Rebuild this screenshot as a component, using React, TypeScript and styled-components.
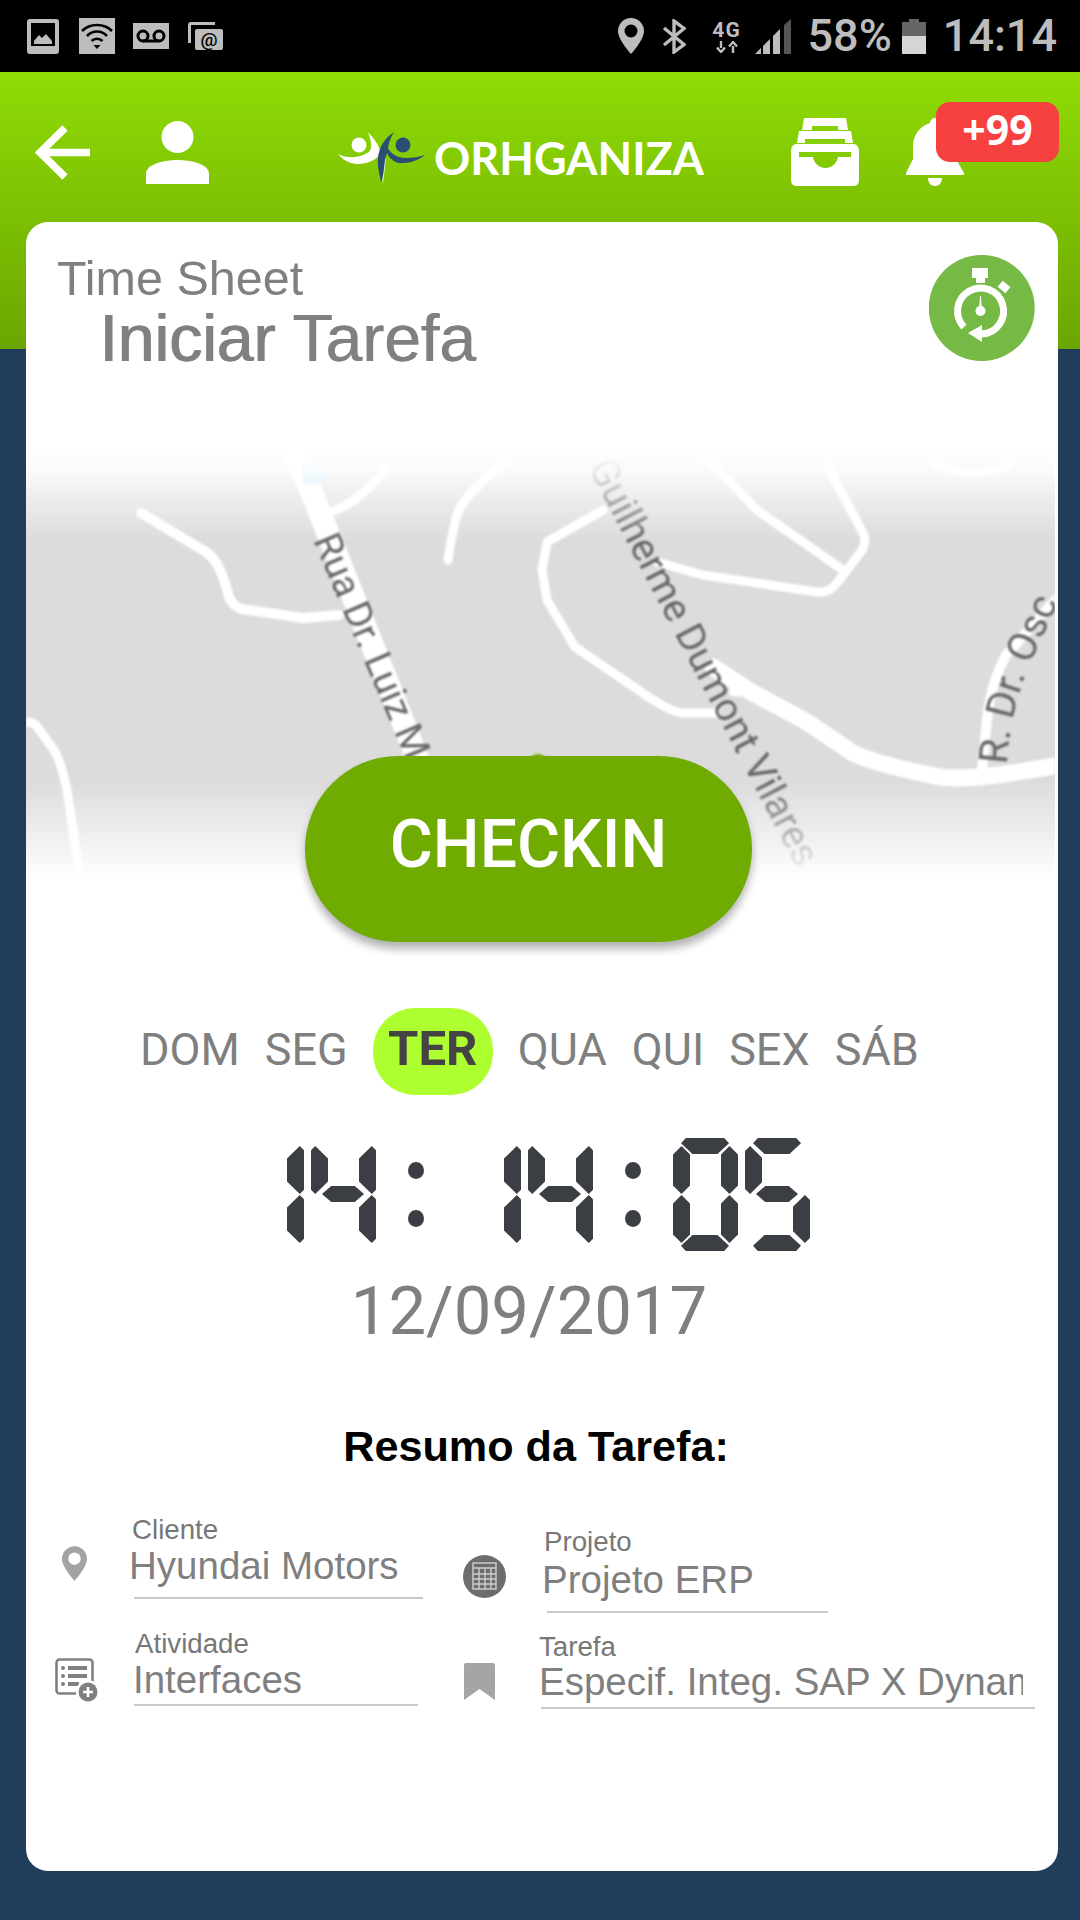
import React from 'react'
import styled, { createGlobalStyle } from 'styled-components'

const GlobalStyle = createGlobalStyle`
    html, body {
        margin: 0;
        padding: 0;
        background: #213d5c;
    }
    #root {
        width: 1080px;
        height: 1920px;
        overflow: hidden;
    }
`

const Page = styled.div`
    width: 1080px;
    height: 1920px;
    background: #213d5c;
    font-family: "Liberation Sans", Arial, sans-serif;
`

/* status bar */
const StatusBar = styled.div`
    height: 72px;
    background: #000;
    display: flex;
    align-items: center;
    padding-right: 23px;
    color: #bdbdbd;
`
const StatusSlot = styled.div<{ $ml: number }>`
    display: flex;
    align-items: center;
    margin-left: ${(p) => p.$ml}px;
`
const StatusRight = styled.div`
    margin-left: auto;
    display: flex;
    align-items: center;
`
const StatusText = styled.span<{ $ml: number }>`
    font-family: Roboto, sans-serif;
    font-size: 45px;
    font-weight: 500;
    line-height: 50px;
    margin-left: ${(p) => p.$ml}px;
`
const NetStack = styled.div`
    width: 28px;
    margin-left: 27px;
    display: flex;
    flex-direction: column;
    align-items: center;
`
const NetLabel = styled.span`
    font-family: Roboto, sans-serif;
    font-size: 21px;
    font-weight: 700;
    line-height: 21px;
    letter-spacing: 1px;
`

/* green header */
const Header = styled.header`
    height: 277px;
    background: linear-gradient(to bottom, #8fdc06, #6ba500);
    padding: 46px 0 0 35px;
    box-sizing: border-box;
`
const TopRow = styled.div`
    height: 68px;
    display: flex;
    align-items: center;
`
const TopIcon = styled.div<{ $ml: number; $w: number }>`
    width: ${(p) => p.$w}px;
    margin-left: ${(p) => p.$ml}px;
    flex: none;
    display: flex;
    position: relative;
`
const Logo = styled.div`
    width: 368px;
    margin-left: 127px;
    padding-top: 12px;
    flex: none;
    display: flex;
    align-items: center;
`
const LogoText = styled.span`
    margin-left: 7px;
    font-family: Lato, sans-serif;
    font-size: 45px;
    font-weight: 700;
    line-height: 50px;
    color: #fff;
    white-space: nowrap;
`
const Badge = styled.div`
    position: absolute;
    left: 30px;
    top: -16px;
    width: 123px;
    height: 60px;
    border-radius: 14px;
    background: #f74040;
    color: #fff;
    font-family: "Noto Sans", sans-serif;
    font-size: 41px;
    font-weight: 700;
    line-height: 54px;
    text-align: center;
`

/* card */
const Card = styled.main`
    position: relative;
    width: 1032px;
    height: 1649px;
    margin: -127px 0 0 26px;
    background: #fff;
    border-radius: 22px;
    overflow: hidden;
`
const CardHead = styled.div`
    display: flex;
    justify-content: space-between;
    align-items: flex-start;
    padding: 30px 23px 0 31px;
    height: 117px;
`
const Overline = styled.div`
    font-size: 48.5px;
    line-height: 48px;
    color: #808080;
    padding-top: 2px;
`
const Title = styled.h1`
    margin: 4px 0 0 42px;
    font-size: 66px;
    line-height: 64px;
    font-weight: 400;
    color: #808080;
    text-shadow: 0.8px 0 0 #808080;
    & b {
        font-weight: 400;
        text-shadow: 1.2px 0 0 #808080;
    }
`
const TimerBadge = styled.div`
    width: 106px;
    height: 106px;
    margin-top: 3px;
    display: flex;
`

const MapArea = styled.div`
    position: relative;
    height: 430px;
    margin-top: 81px;
    margin-right: 3px;
    background: #dcdcdc;
    overflow: hidden;
    & svg {
        display: block;
        filter: blur(1px);
    }
    &::after {
        content: '';
        position: absolute;
        inset: 0;
        background: linear-gradient(
            to bottom,
            #fff 0,
            rgba(255, 255, 255, 0.85) 5%,
            rgba(255, 255, 255, 0.5) 11%,
            rgba(255, 255, 255, 0) 21%,
            rgba(255, 255, 255, 0) 77%,
            #fff 100%
        );
    }
`
const CheckinButton = styled.button`
    position: relative;
    display: block;
    width: 447px;
    height: 186px;
    margin: -124px 0 0 279px;
    padding: 0 0 10px;
    border: none;
    border-radius: 93px;
    background: #6fab00;
    color: #fff;
    font-family: Roboto, sans-serif;
    font-size: 66px;
    font-weight: 500;
    box-shadow: 0 7px 9px rgba(0, 0, 0, 0.3);
`

const Days = styled.div`
    display: flex;
    align-items: center;
    gap: 25px;
    height: 87px;
    margin-top: 66px;
    padding-left: 114px;
`
const Day = styled.span<{ $active?: boolean }>`
    font-family: Roboto, sans-serif;
    font-size: ${(p) => (p.$active ? 49 : 45)}px;
    font-weight: ${(p) => (p.$active ? 700 : 400)};
    color: ${(p) => (p.$active ? '#444' : '#7f7f7f')};
    padding-bottom: ${(p) => (p.$active ? 0 : 4)}px;
    ${(p) =>
        p.$active &&
        `
        width: 120px;
        height: 87px;
        line-height: 82px;
        text-align: center;
        border-radius: 42px;
        background: #adff2f;
    `}
`

const Clock = styled.div`
    display: flex;
    gap: 7px;
    margin: 43px 0 0 213px;
    height: 113px;
`
const Digit = styled.div`
    position: relative;
    width: 65px;
    height: 113px;
    flex: none;
`
const VSeg = styled.i<{ $x: number; $y: number; $tip: number }>`
    position: absolute;
    left: ${(p) => p.$x}px;
    top: ${(p) => p.$y}px;
    width: 17px;
    height: 48px;
    background: #3b3e43;
    clip-path: polygon(
        ${(p) => p.$tip}% 0,
        100% ${(p) => (100 - p.$tip) * 0.35}%,
        100% ${(p) => 100 - (100 - p.$tip) * 0.35}%,
        ${(p) => p.$tip}% 100%,
        0 ${(p) => 100 - p.$tip * 0.35}%,
        0 ${(p) => p.$tip * 0.35}%
    );
`
const HSeg = styled.i<{ $y: number; $kind: 'top' | 'mid' | 'bottom' }>`
    position: absolute;
    left: ${(p) => (p.$kind === 'mid' ? 11 : 8)}px;
    top: ${(p) => p.$y}px;
    width: ${(p) => (p.$kind === 'mid' ? 42 : 48)}px;
    height: 16px;
    background: #3b3e43;
    clip-path: ${(p) =>
        p.$kind === 'top'
            ? 'polygon(10% 0, 90% 0, 100% 33%, 76% 100%, 24% 100%, 0 33%)'
            : p.$kind === 'bottom'
              ? 'polygon(24% 0, 76% 0, 100% 67%, 90% 100%, 10% 100%, 0 67%)'
              : 'polygon(22% 0, 78% 0, 100% 50%, 78% 100%, 22% 100%, 0 50%)'};
`
const Colon = styled.div`
    width: 16px;
    height: 113px;
    margin: 0 25px;
    flex: none;
    display: flex;
    flex-direction: column;
    gap: 31px;
    padding-top: 24px;
    box-sizing: border-box;
    & i {
        display: block;
        width: 16px;
        height: 17px;
        border-radius: 50%;
        background: #3b3e43;
    }
`

const DateText = styled.div`
    margin-top: 27px;
    padding-right: 26px;
    text-align: center;
    font-family: Roboto, sans-serif;
    font-size: 67px;
    line-height: 66px;
    color: #7f7f7f;
`
const SummaryTitle = styled.h2`
    margin: 81px 0 0;
    padding-right: 12px;
    text-align: center;
    font-size: 43.2px;
    line-height: 43px;
    font-weight: 700;
    color: #000;
`

const Fields = styled.div`
    display: flex;
    padding-left: 29px;
`
const FieldCol = styled.div<{ $w: number; $mt: number }>`
    width: ${(p) => p.$w}px;
    margin-top: ${(p) => p.$mt}px;
    flex: none;
`
const Field = styled.div<{ $mt?: number }>`
    display: flex;
    margin-top: ${(p) => p.$mt ?? 0}px;
`
const IconSlot = styled.div<{ $w: number; $pl: number; $top: number }>`
    width: ${(p) => p.$w}px;
    padding: ${(p) => p.$top}px 0 0 ${(p) => p.$pl}px;
    box-sizing: border-box;
    flex: none;
    & svg {
        display: block;
    }
`
const FieldBody = styled.div`
    flex: 1;
    min-width: 0;
`
const FieldLabel = styled.div<{ $pl: number }>`
    font-size: 27.7px;
    line-height: 30px;
    color: #777;
    padding-left: ${(p) => p.$pl}px;
`
const FieldValue = styled.div<{ $clip?: number; $mt: number }>`
    margin-top: ${(p) => p.$mt}px;
    font-size: 38.5px;
    line-height: 44px;
    color: #7f7f7f;
    white-space: nowrap;
    overflow: hidden;
    width: ${(p) => (p.$clip ? `${p.$clip}px` : 'auto')};
`
const FieldRule = styled.div<{ $w: number; $ml: number; $mt: number }>`
    width: ${(p) => p.$w}px;
    height: 2px;
    margin: ${(p) => p.$mt}px 0 0 ${(p) => p.$ml}px;
    background: #c9c9c9;
`

/* icons */
const GREY = '#bdbdbd'

const PinIcon = ({ w, h, fill, hole }: { w: number; h: number; fill: string; hole: string }) => (
    <svg width={w} height={h} viewBox="0 0 26 36">
        <path d="M13 0C5.8 0 0 5.8 0 13c0 9 13 23 13 23s13-14 13-23C26 5.8 20.2 0 13 0Z" fill={fill} />
        <circle cx="13" cy="13" r="6.5" fill={hole} />
    </svg>
)

const ImageNote = () => (
    <svg width="32" height="35" viewBox="0 0 32 35">
        <rect width="32" height="35" rx="3" fill={GREY} />
        <rect x="4" y="4" width="24" height="23" fill="#000" />
        <path d="M7 25V22L12 16L15 19L19 15L25 22V25Z" fill={GREY} />
    </svg>
)
const WifiNote = () => (
    <svg width="36" height="36" viewBox="0 0 36 36">
        <rect width="36" height="36" fill={GREY} />
        <g fill="none" stroke="#000" strokeWidth="2.6">
            <path d="M3 13C11 5 25 5 33 13" />
            <path d="M8 18C13.5 12 22.5 12 28 18" />
            <path d="M12.5 23C15.5 20 20.5 20 23.5 23" />
        </g>
        <path d="M14.5 27H21.500L18 31Z" fill="#000" />
    </svg>
)
const VoicemailNote = () => (
    <svg width="36" height="26" viewBox="0 0 36 26">
        <rect width="36" height="26" fill={GREY} />
        <g fill="none" stroke="#000" strokeWidth="3">
            <circle cx="10" cy="13" r="5" />
            <circle cx="26" cy="13" r="5" />
            <path d="M10 18H26" />
        </g>
    </svg>
)
const MailNote = () => (
    <svg width="35" height="28" viewBox="0 0 35 28">
        <path d="M27 1.500H3Q1.500 1.500 1.500 3V21" fill="none" stroke={GREY} strokeWidth="3" />
        <rect x="7" y="7" width="28" height="21" rx="2" fill={GREY} />
        <text x="21" y="24" textAnchor="middle" fontFamily="Roboto, sans-serif" fontSize="19" fontWeight="500" fill="#000">
            @
        </text>
    </svg>
)
const Bluetooth = () => (
    <svg width="24" height="35" viewBox="0 0 24 35">
        <path d="M2 9L22 25.500L12 33V2L22 9.500L2 26" fill="none" stroke={GREY} strokeWidth="3.4" />
    </svg>
)
const NetArrows = () => (
    <svg width="24" height="12" viewBox="0 0 24 12">
        <path d="M6 0V7M2 6.500L6 11L10 6.500" fill="none" stroke={GREY} strokeWidth="2.4" />
        <path d="M18 12V5M14 5.500L18 1L22 5.500" fill="none" stroke={GREY} strokeWidth="2.4" />
    </svg>
)
const Signal = () => (
    <svg width="36" height="35" viewBox="0 0 36 35">
        <polygon points="0,35 6,29 6,35" fill={GREY} />
        <polygon points="8,27 15,20 15,35 8,35" fill={GREY} />
        <polygon points="18,17 25,10 25,35 18,35" fill={GREY} />
        <polygon points="29,6 36,0 36,35 29,35" fill="#555" />
    </svg>
)
const Battery = () => (
    <svg width="24" height="35" viewBox="0 0 24 35">
        <path d="M0 3H7V0H17V3H24V17H0Z" fill="#666" />
        <rect y="17" width="24" height="18" fill="#d6d6d6" />
    </svg>
)

const BackArrow = () => (
    <svg width="55" height="55" viewBox="0 0 55 55">
        <path d="M55 27.500H6M30 3L5 27.500L30 52" fill="none" stroke="#fff" strokeWidth="7.500" />
    </svg>
)
const Person = () => (
    <svg width="63" height="63" viewBox="0 0 63 63">
        <circle cx="31.500" cy="16" r="16" fill="#fff" />
        <path d="M0 63V53C0 43 18 39 31.500 39C45 39 63 43 63 53V63Z" fill="#fff" />
    </svg>
)
const LogoMark = () => (
    <svg width="91" height="56" viewBox="5 8 91 56">
        <circle cx="28" cy="23" r="7.500" fill="#fff" />
        <path d="M7 32C18 37 28 36 38 30C42 26 40 18 37 10C42 16 50 24 49 32C44 40 30 44 20 41C14 39 10 36 7 32Z" fill="#fff" />
        <path d="M49 36L52 62L55 36Z" fill="#fff" opacity="0.85" />
        <circle cx="72" cy="23" r="7.500" fill="#2a4d73" />
        <path d="M63 10C54 16 48 25 47 36C46 45 49 53 50 60C54 52 52 42 56 31C59 37 64 42 72 41C80 41 88 38 94 33C85 36 75 37 68 35C62 33 59 30 57 26C58 20 60 15 63 10Z" fill="#2a4d73" />
    </svg>
)
const Inbox = () => (
    <svg width="68" height="68" viewBox="0 0 68 68">
        <path
            fillRule="evenodd"
            fill="#fff"
            d="M5 26H63Q68 27 68 33V62Q68 68 62 68H6Q0 68 0 62V33Q0 27 5 26ZM8 34V39H22C23 46 29 50 34.500 50C40 50 46 46 47 39H60V34Z
            M8 13H60L62 25H6ZM14 21V25H54V21Z
            M13 0H55L57 12H11ZM21 8V12H47V8Z"
        />
    </svg>
)
const Bell = () => (
    <svg width="58" height="68" viewBox="0 0 58 68">
        <path
            fill="#fff"
            d="M29 0a5 5 0 0 1 5 5C44 8 50 17 50 28V41L58 55V57H0V55L7 41V28C7 17 14 8 24 5a5 5 0 0 1 5-5ZM22 60H36C36 65 33 68 29 68C25 68 22 65 22 60Z"
        />
    </svg>
)
const TimerIcon = () => (
    <svg width="106" height="106" viewBox="9 10 106 106">
        <circle cx="61.700" cy="63" r="53" fill="#76b945" />
        <path d="M52 23H68V33H65V38H56V33H52Z" fill="#fff" />
        <rect x="79" y="38" width="10" height="8" transform="rotate(40 84 42)" fill="#fff" />
        <path d="M44 82A23 23 0 1 1 62 89" fill="none" stroke="#fff" strokeWidth="7" />
        <path d="M48 88L62 80V97Z" fill="#fff" />
        <path d="M59.500 66L60.500 51L61.500 66Z" fill="#fff" stroke="#fff" />
        <circle cx="60.500" cy="66" r="5" fill="#fff" />
    </svg>
)
const ListPlus = () => (
    <svg width="44" height="46" viewBox="0 0 44 46">
        <rect x="1.500" y="1.500" width="36" height="34" rx="3" fill="none" stroke="#808080" strokeWidth="2.600" />
        <g fill="#808080">
            <circle cx="8" cy="10" r="2" />
            <circle cx="8" cy="18" r="2" />
            <circle cx="8" cy="26" r="2" />
            <rect x="13" y="8" width="19" height="4" />
            <rect x="13" y="16" width="19" height="4" />
            <rect x="13" y="24" width="11" height="4" />
        </g>
        <circle cx="33" cy="34" r="12" fill="#fff" />
        <circle cx="33" cy="34" r="9.500" fill="#808080" />
        <path d="M33 29V39M28 34H38" stroke="#fff" strokeWidth="2.600" />
    </svg>
)
const GridBadge = () => (
    <svg width="43" height="43" viewBox="0 0 43 43">
        <circle cx="21.500" cy="21.500" r="21.500" fill="#6d6d6d" />
        <g stroke="#cfcfcf" strokeWidth="1.400" fill="none">
            <rect x="10" y="8" width="23" height="26" />
            <path d="M10 13H33M10 19H33M10 24H33M10 29H33M16 13V34M22 13V34M28 13V34" />
        </g>
    </svg>
)
const Bookmark = () => (
    <svg width="31" height="37" viewBox="0 0 31 37">
        <path d="M0 2Q0 0 2 0H29Q31 0 31 2V37L15.500 26L0 37Z" fill="#a5a5a5" />
    </svg>
)

const Roads = () => (
    <svg width="1029" height="430" viewBox="0 0 1029 430">
        <g fill="none" stroke="#fff" strokeLinecap="round" strokeLinejoin="round">
            <path d="M266 0L282 33L400 330" strokeWidth="23" />
            <path d="M303 63C325 55 345 38 360 18" strokeWidth="9" />
            <path d="M115 63L180 102C192 110 197 125 203 147C208 158 215 160 223 160L277 168L313 165" strokeWidth="10" />
            <path d="M422 110C425 90 428 72 433 60C440 45 460 28 477 13" strokeWidth="9" />
            <path d="M0 272C5 272 9 273 12 278L28 300C35 312 38 325 41 340L50 400L55 433" strokeWidth="9" />
            <path d="M577 60L521 92L516 120L521 150L549 197L624 248C635 255 650 263 657 263H690" strokeWidth="9" />
            <path d="M687 217L727 243L781 272L827 303C845 312 880 320 904 325C925 330 950 330 1034 315" strokeWidth="17" />
            <path d="M631 112L677 125L791 142C800 143 806 140 811 133L834 103C838 98 840 92 838 85L801 15" strokeWidth="9" />
            <path d="M817 120L731 60L690 17L675 0" strokeWidth="9" />
            <path d="M956 320L962 260C966 235 972 220 980 205L1032 147" strokeWidth="10" />
            <path d="M910 15C930 25 960 25 985 15" strokeWidth="7" />
            <path d="M707 242L727 243" strokeWidth="8" />
        </g>
        <rect x="276" y="12" width="23" height="22" rx="3" fill="#bfe7fb" />
        <ellipse cx="512" cy="314" rx="10" ry="10" fill="#6fab00" />
        <g fontFamily="Roboto, sans-serif" fontSize="38" fill="#666">
            <text transform="translate(287 90) rotate(67)">Rua Dr. Luiz M</text>
            <text fontSize="39" transform="translate(562 17) rotate(62.500)">Guilherme Dumont Vilares</text>
            <path id="osc" d="M981 315C983 285 987 260 997 232C1003 215 1013 195 1033 150" fill="none" />
            <text fontSize="40">
                <textPath href="#osc">R. Dr. Osc</textPath>
            </text>
        </g>
    </svg>
)

/* seven segment clock, built from css shapes */
type SegName = 'tl' | 'bl' | 'tr' | 'br' | 't' | 'm' | 'b'
const DIGITS: Record<string, { segs: SegName[]; left: number; right: number }> = {
    '1': { segs: ['tr', 'br'], left: 75, right: 75 },
    '4': { segs: ['tl', 'tr', 'br', 'm'], left: 25, right: 75 },
    '0': { segs: ['tl', 'bl', 'tr', 'br', 't', 'b'], left: 50, right: 50 },
    '5': { segs: ['tl', 'br', 't', 'm', 'b'], left: 30, right: 70 },
}

function SegDigit({ value }: { value: string }) {
    const d = DIGITS[value]
    return (
        <Digit>
            {d.segs.includes('tl') && <VSeg $x={0} $y={8} $tip={d.left} />}
            {d.segs.includes('bl') && <VSeg $x={0} $y={57} $tip={d.left} />}
            {d.segs.includes('tr') && <VSeg $x={48} $y={8} $tip={d.right} />}
            {d.segs.includes('br') && <VSeg $x={48} $y={57} $tip={d.right} />}
            {d.segs.includes('t') && <HSeg $y={0} $kind="top" />}
            {d.segs.includes('m') && <HSeg $y={48} $kind="mid" />}
            {d.segs.includes('b') && <HSeg $y={97} $kind="bottom" />}
        </Digit>
    )
}

const ClockColon = () => (
    <Colon>
        <i />
        <i />
    </Colon>
)

const WEEK = ['DOM', 'SEG', 'TER', 'QUA', 'QUI', 'SEX', 'SÁB']

function App() {
    return (
        <Page>
            <GlobalStyle />
            <StatusBar>
                <StatusSlot $ml={27}><ImageNote /></StatusSlot>
                <StatusSlot $ml={20}><WifiNote /></StatusSlot>
                <StatusSlot $ml={18}><VoicemailNote /></StatusSlot>
                <StatusSlot $ml={19}><MailNote /></StatusSlot>
                <StatusRight>
                    <PinIcon w={26} h={36} fill={GREY} hole="#000" />
                    <StatusSlot $ml={18}><Bluetooth /></StatusSlot>
                    <NetStack>
                        <NetLabel>4G</NetLabel>
                        <NetArrows />
                    </NetStack>
                    <StatusSlot $ml={14}><Signal /></StatusSlot>
                    <StatusText $ml={17}>58%</StatusText>
                    <StatusSlot $ml={10}><Battery /></StatusSlot>
                    <StatusText $ml={17}>14:14</StatusText>
                </StatusRight>
            </StatusBar>

            <Header>
                <TopRow>
                    <TopIcon $ml={0} $w={55}><BackArrow /></TopIcon>
                    <TopIcon $ml={56} $w={63}><Person /></TopIcon>
                    <Logo>
                        <LogoMark />
                        <LogoText>ORHGANIZA</LogoText>
                    </Logo>
                    <TopIcon $ml={87} $w={68}><Inbox /></TopIcon>
                    <TopIcon $ml={47} $w={58}>
                        <Bell />
                        <Badge>+99</Badge>
                    </TopIcon>
                </TopRow>
            </Header>

            <Card>
                <CardHead>
                    <div>
                        <Overline>Time Sheet</Overline>
                        <Title><b>Iniciar</b> Tarefa</Title>
                    </div>
                    <TimerBadge><TimerIcon /></TimerBadge>
                </CardHead>

                <MapArea><Roads /></MapArea>
                <CheckinButton>CHECKIN</CheckinButton>

                <Days>
                    {WEEK.map((d) => (
                        <Day key={d} $active={d === 'TER'}>{d}</Day>
                    ))}
                </Days>

                <Clock aria-label="14:14:05">
                    <SegDigit value="1" />
                    <SegDigit value="4" />
                    <ClockColon />
                    <SegDigit value="1" />
                    <SegDigit value="4" />
                    <ClockColon />
                    <SegDigit value="0" />
                    <SegDigit value="5" />
                </Clock>
                <DateText>12/09/2017</DateText>

                <SummaryTitle>Resumo da Tarefa:</SummaryTitle>

                <Fields>
                    <FieldCol $w={408} $mt={47}>
                        <Field>
                            <IconSlot $w={74} $pl={7} $top={30}>
                                <PinIcon w={25} h={37} fill="#a3a3a3" hole="#fff" />
                            </IconSlot>
                            <FieldBody>
                                <FieldLabel $pl={3}>Cliente</FieldLabel>
                                <FieldValue $mt={-1}>Hyundai Motors</FieldValue>
                                <FieldRule $w={289} $ml={5} $mt={9} />
                            </FieldBody>
                        </Field>
                        <Field $mt={30}>
                            <IconSlot $w={78} $pl={0} $top={29}><ListPlus /></IconSlot>
                            <FieldBody>
                                <FieldLabel $pl={2}>Atividade</FieldLabel>
                                <FieldValue $mt={-1}>Interfaces</FieldValue>
                                <FieldRule $w={284} $ml={1} $mt={2} />
                            </FieldBody>
                        </Field>
                    </FieldCol>
                    <FieldCol $w={572} $mt={59}>
                        <Field>
                            <IconSlot $w={79} $pl={0} $top={28}><GridBadge /></IconSlot>
                            <FieldBody>
                                <FieldLabel $pl={2}>Projeto</FieldLabel>
                                <FieldValue $mt={1}>Projeto ERP</FieldValue>
                                <FieldRule $w={281} $ml={5} $mt={9} />
                            </FieldBody>
                        </Field>
                        <Field $mt={19}>
                            <IconSlot $w={76} $pl={1} $top={31}><Bookmark /></IconSlot>
                            <FieldBody>
                                <FieldLabel $pl={0}>Tarefa</FieldLabel>
                                <FieldValue $mt={-2} $clip={484}>Especif. Integ. SAP X Dynamics</FieldValue>
                                <FieldRule $w={494} $ml={2} $mt={3} />
                            </FieldBody>
                        </Field>
                    </FieldCol>
                </Fields>
            </Card>
        </Page>
    )
}

export default App
